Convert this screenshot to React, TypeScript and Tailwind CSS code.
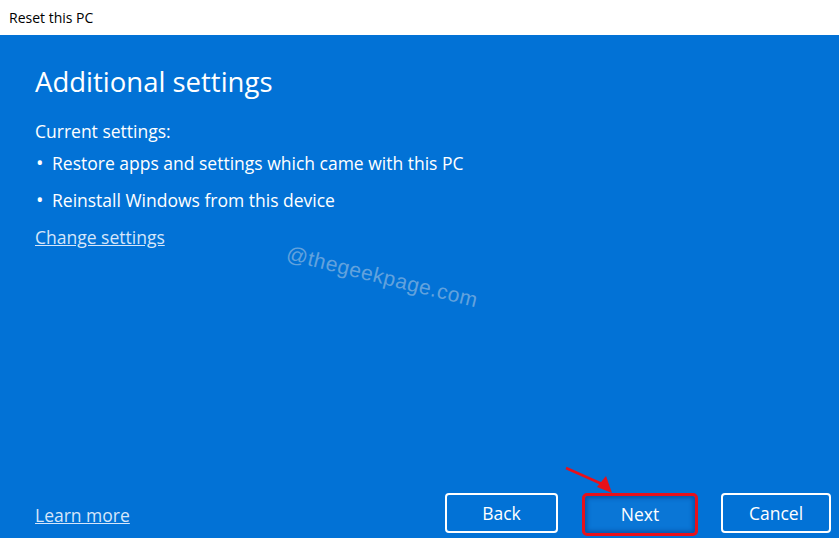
import React from "react";

export default function App() {
  const font = { fontFamily: '"Open Sans", "Noto Sans", sans-serif' };
  return (
    <div className="w-[839px] h-[538px] flex flex-col overflow-hidden" style={font}>
      <div className="h-[35px] bg-white flex items-center pl-[9px] text-[14px] text-black shrink-0">
        Reset this PC
      </div>
      <div className="relative flex-1 bg-[#0272d6] text-white flex flex-col pl-[35px]">
        <h1 className="mt-[27px] text-[27.5px] leading-[40px] font-normal">Additional settings</h1>
        <div className="mt-[17px] text-[17.5px] leading-[24px]">Current settings:</div>
        <ul className="mt-[8px] flex flex-col gap-[13px] text-[17.5px] leading-[24px]">
          <li className="flex items-center">
            <span className="w-[17px] pl-[1px] text-[20px]">•</span>Restore apps and settings which came with this PC
          </li>
          <li className="flex items-center">
            <span className="w-[17px] pl-[1px] text-[20px]">•</span>Reinstall Windows from this device
          </li>
        </ul>
        <a className="mt-[13px] text-[17.5px] leading-[24px] underline text-[#d6e6fa] self-start">Change settings</a>

        <div className="absolute left-[287px] top-[202px] text-[21px] text-[#62a2dd] rotate-[14deg] origin-left tracking-[0.5px]" style={{ fontFamily: '"Liberation Sans", Arial, sans-serif' }}>
          @thegeekpage.com
        </div>

        <div className="mt-auto mb-[1px] flex items-start pr-[8px]">
          <a className="text-[17.5px] leading-[44px] underline text-[#d6e6fa]">Learn more</a>
          <div className="ml-auto flex items-start">
            <button className="w-[113px] h-[40px] rounded-[4px] border-2 border-white text-[17.5px] text-white">Back</button>
            <button className="ml-[24px] w-[116px] h-[43px] rounded-[5px] bg-[#0a76d6] text-[17.5px] text-white shadow-[inset_0_0_4px_2px_rgba(0,60,140,0.6)] border-[3px] border-[#e8101a]">Next</button>
            <button className="ml-[23px] w-[110px] h-[40px] rounded-[4px] border-2 border-white text-[17.5px] text-white">Cancel</button>
          </div>
        </div>

        <svg className="absolute left-[560px] top-[425px]" width="60" height="40" viewBox="0 0 60 40">
          <line x1="6" y1="8" x2="42" y2="24" stroke="#e8101a" strokeWidth="2.5" />
          <polygon points="52,33 37,27 46,16" fill="#e8101a" />
        </svg>
      </div>
    </div>
  );
}
